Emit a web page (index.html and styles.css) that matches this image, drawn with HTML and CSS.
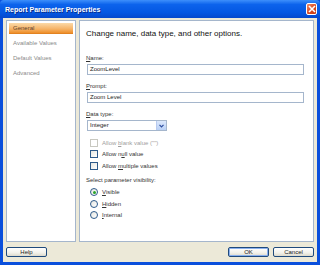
FILE: index.html
```html
<!DOCTYPE html>
<html lang="en">
<head>
  <meta charset="UTF-8">
  <title>Report Parameter Properties</title>
  <link rel="stylesheet" href="styles.css">
</head>
<body>
  <div class="window">
    <div class="titlebar">
      <span class="title">Report Parameter Properties</span>
      <span class="close">
        <svg width="8" height="8" viewBox="0 0 8 8"><path d="M1 1 L7 7 M7 1 L1 7" stroke="#fff" stroke-width="1.6"/></svg>
      </span>
    </div>

    <div class="client">
      <div class="main">
        <ul class="nav">
          <li class="active">General</li>
          <li>Available Values</li>
          <li>Default Values</li>
          <li>Advanced</li>
        </ul>

        <div class="panel">
          <div class="heading">Change name, data type, and other options.</div>

          <div class="field">
            <label><u>N</u>ame:</label>
            <div class="textbox">ZoomLevel</div>
          </div>

          <div class="field">
            <label><u>P</u>rompt:</label>
            <div class="textbox">Zoom Level</div>
          </div>

          <div class="field">
            <label><u>D</u>ata type:</label>
            <div class="select">
              <span>Integer</span>
              <span class="drop">
                <svg width="5" height="4" viewBox="0 0 5 4"><path d="M0.5 0.8 L2.5 2.8 L4.5 0.8" fill="none" stroke="#2b4c9e" stroke-width="1.2"/></svg>
              </span>
            </div>
          </div>

          <div class="checks">
            <div class="check disabled"><span class="box"></span><span>Allow <u>b</u>lank value ("")</span></div>
            <div class="check"><span class="box"></span><span>Allow n<u>u</u>ll value</span></div>
            <div class="check"><span class="box"></span><span>Allow <u>m</u>ultiple values</span></div>
          </div>

          <div class="vis-label">Select parameter visibility:</div>
          <div class="radios">
            <div class="radio checked"><span class="dot"></span><span><u>V</u>isible</span></div>
            <div class="radio"><span class="dot"></span><span><u>H</u>idden</span></div>
            <div class="radio"><span class="dot"></span><span><u>I</u>nternal</span></div>
          </div>
        </div>
      </div>

      <div class="buttons">
        <button class="btn">Help</button>
        <div class="right">
          <button class="btn default">OK</button>
          <button class="btn">Cancel</button>
        </div>
      </div>
    </div>
  </div>
</body>
</html>
```

FILE: styles.css
```css
body {
  margin: 0;
  font-family: 'Liberation Sans', Arial, sans-serif;
  background: #fff;
}

.window {
  width: 320px;
  height: 265px;
  box-sizing: border-box;
  background: #0a4fdc;
  display: flex;
  flex-direction: column;
}

.titlebar {
  height: 18px;
  display: flex;
  align-items: center;
  justify-content: space-between;
  padding: 0 3px 0 5px;
  background: linear-gradient(#3d8ffb 0%, #0c63ec 25%, #0457e2 70%, #0549cc 100%);
  border-radius: 4px 4px 0 0;
}

.title {
  color: #fff;
  font-weight: bold;
  font-size: 7px;
  text-shadow: 1px 1px 0 #0a2e8a;
}

.close {
  width: 11px;
  height: 12px;
  box-sizing: border-box;
  border: 1px solid #fff;
  border-radius: 2px;
  background: linear-gradient(135deg, #f08a6a, #d8461e 60%, #c23a14);
  display: flex;
  align-items: center;
  justify-content: center;
}

.client {
  flex: 1;
  margin: 0 3px 3px 3px;
  background: #ece9d8;
  display: flex;
  flex-direction: column;
  padding: 2px 3px 0 3px;
}

.main {
  display: flex;
  gap: 3px;
  height: 222px;
}

.nav {
  list-style: none;
  margin: 0;
  padding: 2px 2px;
  width: 70px;
  box-sizing: border-box;
  background: #fff;
  border: 1px solid #a5b6cc;
}

.nav li {
  height: 15px;
  line-height: 11px;
  font-size: 6px;
  color: #8a8a8a;
  padding: 0 0 0 4px;
}

.nav li.active {
  height: 11px;
  margin-bottom: 4px;
  color: #5a4030;
  background: linear-gradient(#fbd9a8, #f5b266 55%, #ee8f2a 90%, #d8781a);
}

.panel {
  flex: 1;
  background: #fff;
  border: 1px solid #a5b6cc;
  padding: 8px 9px 0 6px;
}

.heading {
  font-size: 8px;
  color: #111;
  margin-bottom: 17px;
}

.field label {
  display: block;
  font-size: 6px;
  color: #333;
  height: 7px;
  line-height: 7px;
}

.field {
  margin-bottom: 8px;
}

.textbox {
  margin-top: 2px;
  margin-left: 1px;
  height: 11px;
  box-sizing: border-box;
  border: 1px solid #a5b6cc;
  font-size: 6px;
  line-height: 9px;
  padding-left: 2px;
  color: #222;
}

.select {
  margin-top: 2px;
  margin-left: 1px;
  width: 80px;
  height: 11px;
  box-sizing: border-box;
  border: 1px solid #a5b6cc;
  font-size: 6px;
  line-height: 9px;
  padding-left: 2px;
  color: #222;
  display: flex;
  justify-content: space-between;
}

.drop {
  width: 9px;
  height: 9px;
  background: linear-gradient(#dce8fc, #b9d0f6);
  border-left: 1px solid #b9cbef;
  display: flex;
  align-items: center;
  justify-content: center;
}

.checks {
  margin-top: -2px;
  padding-left: 4px;
}

.check {
  display: flex;
  align-items: center;
  gap: 4px;
  height: 11.5px;
  font-size: 6px;
  color: #333;
}

.check .box {
  width: 6px;
  height: 6px;
  border: 1px solid #2e5a8a;
  background: linear-gradient(135deg, #e6e6e0, #fff);
}

.check.disabled {
  color: #a0a0a0;
}

.check.disabled .box {
  border-color: #c8c8c0;
  background: #fff;
}

.vis-label {
  margin-top: 5px;
  font-size: 6px;
  color: #333;
  height: 8px;
}

.radios {
  padding-left: 4px;
  margin-top: 2px;
}

.radio {
  display: flex;
  align-items: center;
  gap: 4px;
  height: 11.5px;
  font-size: 6px;
  color: #333;
}

.radio .dot {
  width: 6px;
  height: 6px;
  border: 1px solid #2e5a8a;
  border-radius: 50%;
  background: linear-gradient(135deg, #e6e6e0, #fff);
  display: flex;
  align-items: center;
  justify-content: center;
}

.radio.checked .dot::after {
  content: "";
  width: 3px;
  height: 3px;
  border-radius: 50%;
  background: #2aa42a;
}

.buttons {
  display: flex;
  justify-content: space-between;
  margin-top: 5px;
}

.right {
  display: flex;
  gap: 4px;
}

.btn {
  width: 41px;
  height: 10px;
  padding: 0;
  font-family: 'Liberation Sans', Arial, sans-serif;
  font-size: 6px;
  line-height: 8px;
  color: #222;
  border: 1px solid #1f4a7c;
  border-radius: 2px;
  background: linear-gradient(#fff, #f2f1ea 60%, #dcd9cc);
}

.btn.default {
  box-shadow: inset 0 0 0 1px #8ab0ee;
}
```
